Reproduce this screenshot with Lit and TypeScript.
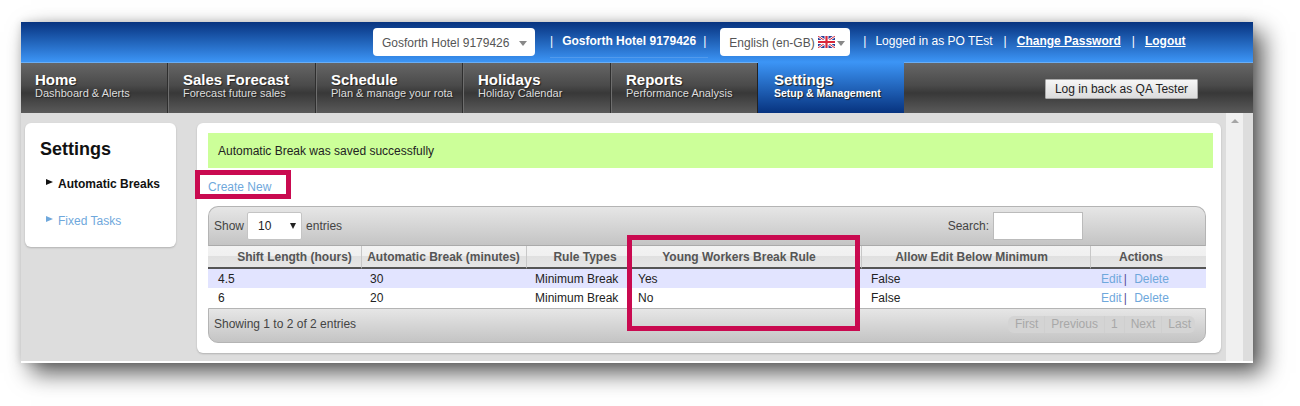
import { LitElement, html, css, svg } from "lit";
import { customElement } from "lit/decorators.js";

const flag = svg`<svg class="flag" width="17" height="12" viewBox="0 0 17 12" aria-hidden="true">
  <rect width="17" height="12" fill="#2a3f9a"/>
  <path d="M0 0L17 12M17 0L0 12" stroke="#fff" stroke-width="2.6"/>
  <path d="M0 0L17 12M17 0L0 12" stroke="#d8283c" stroke-width="1"/>
  <path d="M8.5 0V12M0 6H17" stroke="#fff" stroke-width="4"/>
  <path d="M8.5 0V12M0 6H17" stroke="#d8283c" stroke-width="2.2"/>
</svg>`;

const navItems = [
  ["Home", "Dashboard & Alerts"],
  ["Sales Forecast", "Forecast future sales"],
  ["Schedule", "Plan & manage your rota"],
  ["Holidays", "Holiday Calendar"],
  ["Reports", "Performance Analysis"],
  ["Settings", "Setup & Management"],
];

const rows = [
  ["4.5", "30", "Minimum Break", "Yes", "False"],
  ["6", "20", "Minimum Break", "No", "False"],
];

@customElement("app-root")
export class AppRoot extends LitElement {
  static styles = css`
    :host {
      display: block;
      position: relative;
      width: 1300px;
      height: 406px;
      overflow: hidden;
      background: #fff;
      font-family: "Liberation Sans", Arial, sans-serif;
      font-size: 12px;
      color: #222;
    }
    .frame {
      position: absolute;
      left: 21px;
      top: 22px;
      width: 1232px;
      height: 341px;
      background: #fff;
      box-shadow: 10px 10px 22px rgba(0, 0, 0, 0.66), 0 0 8px rgba(0, 0, 0, 0.14);
      display: flex;
      flex-direction: column;
    }
    .top {
      height: 41px;
      box-sizing: border-box;
      padding: 6px 0 0 352px;
      background: linear-gradient(#07337f, #3c95f6);
      border-bottom: 1px solid #6aaef5;
      display: flex;
      align-items: flex-start;
      color: #fff;
      white-space: nowrap;
    }
    .pick {
      height: 28px;
      box-sizing: border-box;
      background: #fff;
      border-radius: 4px;
      color: #555;
      display: flex;
      align-items: center;
      padding-top: 2px;
    }
    .pick.hotel { width: 162px; padding-left: 9px; }
    .pick.lang { width: 130px; padding-left: 9px; margin-left: 12px; }
    .flag { margin-left: 3px; margin-top: -2px; }
    .caret {
      width: 0;
      height: 0;
      border: 4px solid transparent;
      border-top: 5px solid #888;
      border-bottom: 0;
    }
    .hotel .caret { margin-left: 10px; }
    .lang .caret { margin-left: 2px; }
    .info {
      display: flex;
      align-items: center;
      height: 26px;
    }
    .info.first {
      margin-left: 15px;
      padding: 0 2px 3px 0;
      border-bottom: 1px solid rgba(255, 255, 255, 0.14);
    }
    .info b { font-weight: 700; }
    .info a { color: #fff; font-weight: 700; text-decoration: underline; }
    .m7 { margin-left: 7px; }
    .m8 { margin-left: 9px; }
    .m14 { margin-left: 13px; }
    .m11 { margin-left: 11px; }
    .m12 { margin-left: 10px; }

    nav {
      height: 50px;
      display: flex;
      background: linear-gradient(#666 0%, #4a4a4a 45%, #383838 60%, #5a5a5a 100%);
      color: #fff;
    }
    .tab {
      width: 148px;
      box-sizing: border-box;
      padding: 9px 0 0 15px;
      border-left: 1px solid #2e2e2e;
      box-shadow: inset 1px 0 0 #6e6e6e;
      white-space: nowrap;
    }
    .tab:first-child { width: 146px; padding-left: 14px; border-left: 0; box-shadow: none; }
    .tab:nth-child(3) { width: 147px; }
    .tab:nth-child(5) { border-right: 1px solid #222; }
    .tab.active {
      width: 146px;
      margin-top: -1px;
      padding-top: 10px;
      padding-left: 16px;
      border-left: 0;
      box-shadow: none;
      background: linear-gradient(#3c95f6, #07337f);
    }
    .tab .t {
      font-size: 15px;
      font-weight: 700;
      line-height: 16px;
      text-shadow: 1px 1px 1px #222;
    }
    .tab .s {
      font-size: 11px;
      line-height: 11px;
      color: #ddd;
      text-shadow: 1px 1px 1px #222;
    }
    .tab.active .s { color: #fff; font-weight: 700; font-size: 10.5px; }
    .navright {
      flex: 1;
      display: flex;
      padding: 16px 0 0 141px;
    }
    .navbtn {
      width: 153px;
      height: 20px;
      box-sizing: border-box;
      background: linear-gradient(#f6f6f6, #dcdcdc);
      border: 1px solid #aaa;
      color: #222;
      font-size: 12px;
      line-height: 18px;
      text-align: center;
      border-radius: 1px;
    }

    .body {
      height: 248px;
      background: #ddd;
      display: flex;
      align-items: flex-start;
    }
    .side {
      width: 151px;
      height: 124px;
      margin: 10px 0 0 4px;
      box-sizing: border-box;
      padding: 16px 0 0 15px;
      background: #fff;
      border-radius: 6px;
      box-shadow: 0 1px 2px rgba(0, 0, 0, 0.2);
    }
    .side h2 {
      margin: 0 0 17px;
      font-size: 18px;
      line-height: 21px;
      font-weight: 700;
      color: #111;
    }
    .link {
      display: flex;
      align-items: center;
      height: 14px;
      padding-left: 6px;
      font-size: 12px;
      white-space: nowrap;
    }
    .link i {
      width: 0;
      height: 0;
      border-left: 7px solid currentColor;
      border-top: 3.5px solid transparent;
      border-bottom: 3.5px solid transparent;
      margin: -4px 5px 0 0;
    }
    .link.on { color: #111; font-weight: 700; margin-bottom: 23px; }
    .link.off { color: #6fa8dc; }

    .card {
      width: 1024px;
      height: 230px;
      margin: 10px 0 0 21px;
      box-sizing: border-box;
      padding: 10px 15px 0 11px;
      background: #fff;
      border-radius: 6px;
      box-shadow: 0 1px 2px rgba(0, 0, 0, 0.2);
    }
    .ok {
      height: 35px;
      width: 1005px;
      margin-right: -7px;
      box-sizing: border-box;
      padding: 11px 0 0 10px;
      line-height: 14px;
      background: #ccff99;
      color: #222;
    }
    .create {
      display: block;
      height: 38px;
      padding-top: 12px;
      box-sizing: border-box;
      line-height: 14px;
      color: #6fa8dc;
    }
    .tool {
      height: 40px;
      box-sizing: border-box;
      border: 1px solid #b4b4b4;
      border-bottom: 1px solid #aaa;
      border-radius: 10px 10px 0 0;
      background: linear-gradient(#e6e6e6, #c4c4c4);
      display: flex;
      align-items: center;
      padding-left: 5px;
      color: #444;
      white-space: nowrap;
    }
    .size {
      width: 55px;
      height: 28px;
      box-sizing: border-box;
      margin: 0 4px 0 3px;
      background: #fff;
      border: 1px solid #c4c4c4;
      border-radius: 2px;
      display: flex;
      align-items: center;
      justify-content: space-between;
      padding: 0 5px 0 10px;
      color: #222;
    }
    .size i {
      width: 0;
      height: 0;
      border: 3.5px solid transparent;
      border-top: 6px solid #222;
      border-bottom: 0;
    }
    .searchl { margin-left: auto; }
    .search {
      width: 90px;
      height: 28px;
      box-sizing: border-box;
      margin: 0 122px 0 4px;
      background: #fff;
      border: 1px solid #bbb;
    }
    table {
      width: 998px;
      border-collapse: separate;
      border-spacing: 0;
      table-layout: fixed;
    }
    th {
      height: 23px;
      padding: 0;
      font-size: 12px;
      font-weight: 700;
      color: #555;
      text-align: center;
      background: linear-gradient(#f2f2f2, #f0f0f0 50%, #e0e0e0 50%, #e6e6e6);
      border-bottom: 2px solid #555;
      border-left: 1px solid #c8c8c8;
      box-sizing: border-box;
    }
    th:first-child { border-left: 0; }
    th.c1 { padding-left: 20px; }
    th.c2 { padding-right: 1px; }
    th.c3 { padding-left: 14px; }
    th.c4 { padding-right: 13px; }
    th.c5 { padding-right: 9px; }
    th.c6 { padding-right: 15px; }
    td {
      height: 19px;
      padding: 0 0 0 9px;
      color: #222;
      background: #fff;
    }
    tr.even td { height: 20px; }
    td:first-child,
    td:nth-child(5) { padding-left: 10px; }
    td.act { padding-left: 11px; }
    tr.odd td { background: #e2e4ff; }
    td a { color: #6fa8dc; }
    td span { color: #5a4a9a; margin: 0 4px 0 2px; }
    .foot {
      height: 35px;
      box-sizing: border-box;
      border: 1px solid #b4b4b4;
      border-radius: 0 0 10px 10px;
      background: linear-gradient(#e6e6e6, #c4c4c4);
      display: flex;
      align-items: center;
      justify-content: space-between;
      padding: 0 10px 3px 5px;
      color: #444;
    }
    .pager {
      display: flex;
      height: 17px;
      border-radius: 6px;
      background: #d4d4d4;
      color: #a8a8a8;
      line-height: 17px;
    }
    .pager span { padding: 0 6px; border-right: 1px solid #cfcfcf; }
    .pager span:first-child { padding-left: 7px; }
    .pager span:last-child { border-right: 0; padding-right: 4px; }

    .track {
      width: 17px;
      height: 248px;
      margin-left: 5px;
      background: #f0f0f0;
      display: flex;
      justify-content: center;
      padding-top: 6px;
      box-sizing: border-box;
    }
    .track i {
      width: 0;
      height: 0;
      border: 4px solid transparent;
      border-bottom: 4px solid #a6a6a6;
      border-top: 0;
    }
    .mark {
      position: absolute;
      box-sizing: border-box;
      border: 5px solid #c90a50;
    }
    .mark.a { left: 195px; top: 170px; width: 96px; height: 29px; }
    .mark.b { left: 627px; top: 235px; width: 233px; height: 96px; }
  `;

  render() {
    return html`
      <div class="frame">
        <div class="top">
          <div class="pick hotel">Gosforth Hotel 9179426<span class="caret"></span></div>
          <div class="info first">
            <span>|</span>
            <b class="m8">Gosforth Hotel 9179426</b>
            <span class="m7">|</span>
          </div>
          <div class="pick lang">English (en-GB)${flag}<span class="caret"></span></div>
          <div class="info">
            <span class="m14">|</span>
            <span class="m8">Logged in as PO TEst</span>
            <span class="m11">|</span>
            <a class="m12">Change Password</a>
            <span class="m11">|</span>
            <a class="m12">Logout</a>
          </div>
        </div>
        <nav>
          ${navItems.map(
            ([t, s]) => html`<div class="tab ${t === "Settings" ? "active" : ""}">
              <div class="t">${t}</div>
              <div class="s">${s}</div>
            </div>`
          )}
          <div class="navright"><div class="navbtn">Log in back as QA Tester</div></div>
        </nav>
        <div class="body">
          <aside class="side">
            <h2>Settings</h2>
            <div class="link on"><i></i>Automatic Breaks</div>
            <div class="link off"><i></i>Fixed Tasks</div>
          </aside>
          <main class="card">
            <div class="ok">Automatic Break was saved successfully</div>
            <a class="create">Create New</a>
            <div class="tool">
              Show <div class="size">10<i></i></div> entries
              <span class="searchl">Search:</span>
              <div class="search"></div>
            </div>
            <table>
              <colgroup>
                <col style="width:153px" /><col style="width:165px" /><col style="width:103px" />
                <col style="width:232px" /><col style="width:229px" /><col style="width:116px" />
              </colgroup>
              <thead>
                <tr>
                  <th class="c1">Shift Length (hours)</th>
                  <th class="c2">Automatic Break (minutes)</th>
                  <th class="c3">Rule Types</th>
                  <th class="c4">Young Workers Break Rule</th>
                  <th class="c5">Allow Edit Below Minimum</th>
                  <th class="c6">Actions</th>
                </tr>
              </thead>
              <tbody>
                ${rows.map(
                  (r, i) => html`<tr class=${i === 0 ? "odd" : "even"}>
                    ${r.map((c) => html`<td>${c}</td>`)}
                    <td class="act"><a>Edit</a><span>|</span> <a>Delete</a></td>
                  </tr>`
                )}
              </tbody>
            </table>
            <div class="foot">
              <div>Showing 1 to 2 of 2 entries</div>
              <div class="pager">
                <span>First</span><span>Previous</span><span>1</span><span>Next</span><span>Last</span>
              </div>
            </div>
          </main>
          <div class="track"><i></i></div>
        </div>
      </div>
      <div class="mark a"></div>
      <div class="mark b"></div>
    `;
  }
}
